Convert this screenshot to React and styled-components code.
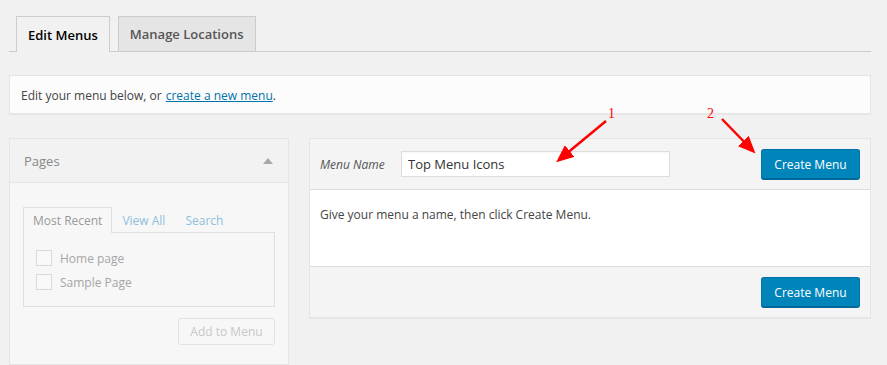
import styled, { createGlobalStyle } from 'styled-components';

const GlobalStyle = createGlobalStyle`
  html, body {
    margin: 0;
    background: #f1f1f1;
    font-family: "Open Sans", "Noto Sans", sans-serif;
    font-size: 12px;
    color: #444;
  }
`;

const App = () => (
  <Page>
    <GlobalStyle />
    <Tabs>
      <Tab active>Edit Menus</Tab>
      <Tab>Manage Locations</Tab>
    </Tabs>

    <Notice>
      Edit your menu below, or <Link href='#'>create a new menu</Link>.
    </Notice>

    <Columns>
      <SidePanel>
        <SideHeader>
          Pages
          <Caret />
        </SideHeader>
        <SideBody>
          <InnerTabs>
            <InnerTab active>Most Recent</InnerTab>
            <InnerTab>View All</InnerTab>
            <InnerTab>Search</InnerTab>
          </InnerTabs>
          <CheckList>
            <CheckRow><Box />Home page</CheckRow>
            <CheckRow><Box />Sample Page</CheckRow>
          </CheckList>
          <SideFooter>
            <GhostButton>Add to Menu</GhostButton>
          </SideFooter>
        </SideBody>
      </SidePanel>

      <MenuPanel>
        <MenuHeader>
          <NameLabel>Menu Name</NameLabel>
          <NameInput defaultValue='Top Menu Icons' />
          <PrimaryButton>Create Menu</PrimaryButton>
        </MenuHeader>
        <MenuBody>Give your menu a name, then click Create Menu.</MenuBody>
        <MenuFooter>
          <PrimaryButton>Create Menu</PrimaryButton>
        </MenuFooter>
      </MenuPanel>
    </Columns>

    <Annotations width='887' height='365' viewBox='0 0 887 365'>
      <defs>
        <marker id='head' markerWidth='7' markerHeight='6' refX='5' refY='3' orient='auto' markerUnits='strokeWidth'>
          <path d='M0,0 L7,3 L0,6 Z' fill='#f00' />
        </marker>
      </defs>
      <line x1='606' y1='121' x2='560' y2='159' stroke='#f00' strokeWidth='2.5' markerEnd='url(#head)' />
      <line x1='722' y1='119' x2='752' y2='150' stroke='#f00' strokeWidth='2.5' markerEnd='url(#head)' />
      <Num x='608' y='118'>1</Num>
      <Num x='707' y='118'>2</Num>
    </Annotations>
  </Page>
);

export default App;

const Page = styled.div`
  position: relative;
  width: 862px;
  height: 365px;
  padding-left: 9px;
  overflow: hidden;
`;

const Tabs = styled.div`
  display: flex;
  gap: 8px;
  margin-top: 16px;
  padding-left: 7px;
  border-bottom: 1px solid #ccc;
  height: 35px;
`;

const Tab = styled.div`
  box-sizing: border-box;
  height: ${p => (p.active ? '36px' : '35px')};
  padding: 0 11px;
  display: flex;
  align-items: center;
  border: 1px solid #ccc;
  border-bottom: none;
  background: ${p => (p.active ? '#f1f1f1' : '#e5e5e5')};
  color: ${p => (p.active ? '#000' : '#555')};
  font-size: 13px;
  font-weight: 600;
`;

const Notice = styled.div`
  margin-top: 23px;
  height: 39px;
  box-sizing: border-box;
  display: flex;
  align-items: center;
  padding: 1px 11px 0;
  background: #fcfcfc;
  border: 1px solid #e5e5e5;
  box-shadow: 0 1px 1px rgba(0, 0, 0, 0.04);
`;

const Link = styled.a`
  color: #0073aa;
  text-decoration: underline;
  margin-left: 4px;
`;

const Columns = styled.div`
  display: flex;
  align-items: flex-start;
  gap: 20px;
  margin-top: 24px;
`;

const SidePanel = styled.div`
  width: 280px;
  box-sizing: border-box;
  border: 1px solid #e5e5e5;
  background: #f7f7f7;
`;

const SideHeader = styled.div`
  height: 43px;
  display: flex;
  align-items: center;
  justify-content: space-between;
  padding: 0 14px;
  background: #f2f2f2;
  border-bottom: 1px solid #e5e5e5;
  color: #888;
  font-size: 13px;
`;

const Caret = styled.span`
  width: 0;
  height: 0;
  margin-right: 1px;
  border-left: 5px solid transparent;
  border-right: 5px solid transparent;
  border-bottom: 6px solid #a8a8a8;
`;

const SideBody = styled.div`
  padding: 24px 13px 19px;
`;

const InnerTabs = styled.div`
  display: flex;
  height: 25px;
`;

const InnerTab = styled.div`
  box-sizing: border-box;
  height: ${p => (p.active ? '26px' : '25px')};
  padding: 0 9px;
  display: flex;
  align-items: center;
  border: 1px solid ${p => (p.active ? '#e0e0e0' : 'transparent')};
  border-bottom: none;
  background: #f7f7f7;
  color: ${p => (p.active ? '#999' : '#8ec0da')};
  position: relative;
  z-index: 1;
`;

const CheckList = styled.div`
  height: 75px;
  box-sizing: border-box;
  border: 1px solid #e0e0e0;
  padding: 17px 12px 0;
  display: flex;
  flex-direction: column;
  gap: 8px;
`;

const CheckRow = styled.div`
  display: flex;
  align-items: center;
  gap: 8px;
  color: #a6a6a6;
  height: 16px;
`;

const Box = styled.span`
  width: 16px;
  height: 16px;
  box-sizing: border-box;
  border: 1px solid #d9d9d9;
  background: #f9f9f9;
`;

const SideFooter = styled.div`
  display: flex;
  justify-content: flex-end;
  margin-top: 11px;
`;

const GhostButton = styled.div`
  width: 97px;
  height: 27px;
  box-sizing: border-box;
  display: flex;
  align-items: center;
  justify-content: center;
  border: 1px solid #e2e2e2;
  border-radius: 3px;
  background: #f7f7f7;
  color: #c8c8c8;
`;

const MenuPanel = styled.div`
  width: 562px;
  box-sizing: border-box;
  border: 1px solid #e5e5e5;
  box-shadow: 0 1px 1px rgba(0, 0, 0, 0.04);
  background: #fff;
`;

const MenuHeader = styled.div`
  height: 50px;
  display: flex;
  align-items: center;
  padding: 0 10px;
  background: #f4f4f4;
  border-bottom: 1px solid #ddd;
`;

const NameLabel = styled.span`
  font-style: italic;
  color: #555;
  width: 81px;
`;

const NameInput = styled.input`
  width: 269px;
  height: 26px;
  box-sizing: border-box;
  border: 1px solid #ddd;
  background: #fff;
  padding: 0 6px;
  font-family: inherit;
  font-size: 13px;
  color: #333;
  outline: none;
  box-shadow: inset 0 1px 2px rgba(0, 0, 0, 0.04);
`;

const PrimaryButton = styled.div`
  margin-left: auto;
  width: 99px;
  height: 30px;
  box-sizing: border-box;
  display: flex;
  align-items: center;
  justify-content: center;
  background: #0085ba;
  border: 1px solid #0073aa;
  border-bottom-color: #006799;
  border-radius: 3px;
  box-shadow: 0 1px 0 #006799;
  color: #fff;
`;

const MenuBody = styled.div`
  height: 76px;
  box-sizing: border-box;
  padding: 16px 10px 0;
  color: #444;
`;

const MenuFooter = styled.div`
  height: 50px;
  display: flex;
  align-items: center;
  padding: 0 10px;
  background: #f4f4f4;
  border-top: 1px solid #ddd;
`;

const Annotations = styled.svg`
  position: absolute;
  top: 0;
  left: 0;
  pointer-events: none;
`;

const Num = styled.text`
  fill: #f00;
  font-family: "Liberation Serif", serif;
  font-size: 14px;
`;
